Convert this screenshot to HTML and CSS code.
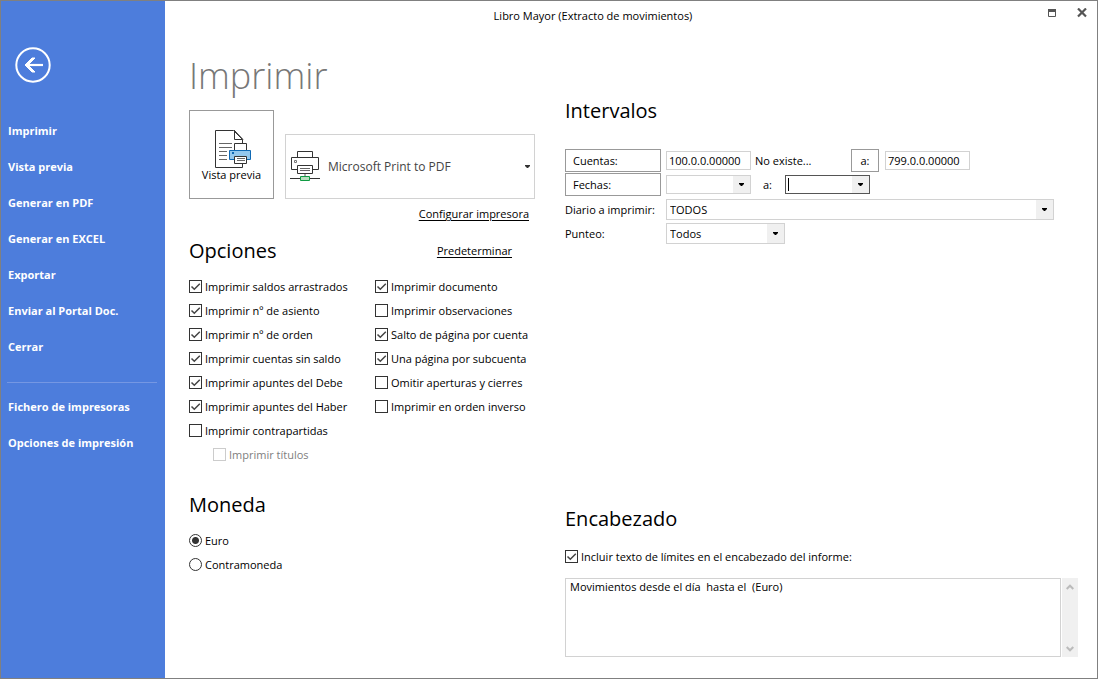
FILE: index.html
```html
<!DOCTYPE html>
<html lang="es">
<head>
<meta charset="utf-8">
<meta name="viewport" content="width=device-width, initial-scale=1">
<title>Libro Mayor (Extracto de movimientos)</title>
<link rel="stylesheet" href="styles.css">
</head>
<body>
<div class="window">
  <aside class="sidebar">
    <button class="back" type="button" aria-label="Volver">
      <svg width="36" height="36" viewBox="0 0 36 36" fill="none" stroke="#fff"><circle cx="18" cy="18" r="16.7" stroke-width="2"/><path d="M28 18H11.5" stroke-width="2.2"/><path d="M17 11h3L13 18l7 7H17l-7-7z" fill="#fff" stroke-width="1"/></svg>
    </button>
    <nav class="menu">
      <button type="button">Imprimir</button>
      <button type="button">Vista previa</button>
      <button type="button">Generar en PDF</button>
      <button type="button">Generar en EXCEL</button>
      <button type="button">Exportar</button>
      <button type="button">Enviar al Portal Doc.</button>
      <button type="button">Cerrar</button>
      <hr>
      <button type="button">Fichero de impresoras</button>
      <button type="button">Opciones de impresión</button>
    </nav>
  </aside>

  <div class="main">
    <header class="titlebar">
      <span class="title">Libro Mayor (Extracto de movimientos)</span>
      <div class="controls">
        <button type="button" aria-label="Maximizar"><svg width="10" height="10" viewBox="0 0 10 10"><path d="M1.500 1.500h7v7h-7z" fill="none" stroke="#555"/><path d="M1 1h8v3H1z" fill="#555"/></svg></button>
        <button type="button" aria-label="Cerrar"><svg width="10" height="10" viewBox="0 0 10 10"><path d="M1 .5l8 8M9 .5L1 8.500" fill="none" stroke="#555" stroke-width="2.2"/></svg></button>
      </div>
    </header>

    <main class="content">
      <div class="left">
        <h1>Imprimir</h1>
        <div class="cards">
          <button class="preview" type="button">
            <svg width="41" height="38" viewBox="-4 0 41 38" fill="none"><path d="M27.500 14V10.500L18.500 1.500H.5V38.500H27.500V34" stroke="#333" fill="#fff"/><path d="M19.500 1.500V10.500H27.500M19 1l9 9.500" stroke="#333"/><path d="M4 14.500H17M4 18.500H17M4 22.500H12M4 26.500H12M4 30.500H12" stroke="#666"/><path d="M19.500 21.500V14.500H31.500V21.500" fill="#fff" stroke="#333"/><path d="M14.500 21.500H35.500V30.500H14.500Z" fill="#93c8ee" stroke="#0f69b4"/><path d="M17 23h2v2h-2z" fill="#0f69b4"/><path d="M19.500 27.500H31.500V34.500H19.500Z" fill="#fff" stroke="#333"/><path d="M22 29.500H30M22 31.500H30" stroke="#666"/></svg>
            <span>Vista previa</span>
          </button>
          <button class="printer" type="button">
            <svg width="30" height="32" viewBox="0 0 30 32" fill="none"><path d="M7.500 7V.5H22.500V7" stroke="#333"/><path d="M1.500 6.500H28.500V18.500H1.500Z" fill="#fff" stroke="#333"/><path d="M4.500 9.500h2v2h-2z" stroke="#777"/><path d="M14 22h2v4h-2z" fill="#aaa"/><path d="M7.500 14.500H22.500V22.500H7.500Z" fill="#fff" stroke="#333"/><path d="M10 17.500H20M10 19.500H20" stroke="#666"/><path d="M0 27.500H30" stroke="#333"/><path d="M10.500 25.500H19.500V29.500H10.500Z" fill="#b7dfbe" stroke="#109b43"/></svg>
            <span>Microsoft Print to PDF</span>
            <svg width="5" height="3" viewBox="0 0 5 3"><path d="M0 0h5v1L3 3H2L0 1z" fill="#333"/></svg>
          </button>
        </div>
        <a class="configure" href="#">Configurar impresora</a>

        <div class="heading-row">
          <h2>Opciones</h2>
          <a href="#">Predeterminar</a>
        </div>
        <div class="options">
          <div>
            <label><input type="checkbox" checked>Imprimir saldos arrastrados</label>
            <label><input type="checkbox" checked>Imprimir nº de asiento</label>
            <label><input type="checkbox" checked>Imprimir nº de orden</label>
            <label><input type="checkbox" checked>Imprimir cuentas sin saldo</label>
            <label><input type="checkbox" checked>Imprimir apuntes del Debe</label>
            <label><input type="checkbox" checked>Imprimir apuntes del Haber</label>
            <label><input type="checkbox">Imprimir contrapartidas</label>
            <label class="nested"><input type="checkbox" disabled>Imprimir títulos</label>
          </div>
          <div>
            <label><input type="checkbox" checked>Imprimir documento</label>
            <label><input type="checkbox">Imprimir observaciones</label>
            <label><input type="checkbox" checked>Salto de página por cuenta</label>
            <label><input type="checkbox" checked>Una página por subcuenta</label>
            <label><input type="checkbox">Omitir aperturas y cierres</label>
            <label><input type="checkbox">Imprimir en orden inverso</label>
          </div>
        </div>

        <section class="currency">
          <h2>Moneda</h2>
          <label><input type="radio" name="moneda" checked>Euro</label>
          <label><input type="radio" name="moneda">Contramoneda</label>
        </section>
      </div>

      <div class="right">
        <section class="ranges">
          <h2>Intervalos</h2>
          <div class="row">
            <button class="field-button" type="button">Cuentas:</button>
            <input class="text" type="text" value="100.0.0.00000" aria-label="Cuenta inicial">
            <span class="status">No existe...</span>
            <button class="to-button" type="button">a:</button>
            <input class="text" type="text" value="799.0.0.00000" aria-label="Cuenta final">
          </div>
          <div class="row">
            <button class="field-button" type="button">Fechas:</button>
            <select class="date" aria-label="Fecha inicial"><option></option></select>
            <span class="to">a:</span>
            <select class="date active" aria-label="Fecha final"><option></option></select>
          </div>
          <div class="row lower">
            <label class="name" for="diario">Diario a imprimir:</label>
            <select class="wide" id="diario"><option>TODOS</option></select>
          </div>
          <div class="row lower">
            <label class="name" for="punteo">Punteo:</label>
            <select class="medium" id="punteo"><option>Todos</option></select>
          </div>
        </section>

        <section class="header-text">
          <h2>Encabezado</h2>
          <label><input type="checkbox" checked>Incluir texto de límites en el encabezado del informe:</label>
          <div class="memo">
            <textarea aria-label="Texto del encabezado">Movimientos desde el día  hasta el  (Euro)</textarea>
            <div class="scroll">
              <svg width="8" height="6" viewBox="0 0 8 6"><path d="M.7 5L4 1.700L7.300 5" fill="none" stroke="#bbb" stroke-width="2"/></svg>
              <svg width="8" height="6" viewBox="0 0 8 6"><path d="M.7 1L4 4.300L7.300 1" fill="none" stroke="#bbb" stroke-width="2"/></svg>
            </div>
          </div>
        </section>
      </div>
    </main>
  </div>
</div>
</body>
</html>
```

FILE: styles.css
```css
* { box-sizing: border-box; }

body {
  margin: 0;
  background: #fff;
  color: #000;
  font: 11px/16px "Segoe UI", "Open Sans", "Noto Sans", sans-serif;
}

button, input, select, textarea {
  margin: 0;
  font: inherit;
  color: inherit;
  border-radius: 0;
}

a { color: #000; text-underline-offset: 2px; }

h1, h2 { margin: 0; font-weight: 400; }
h1 { font-size: 36px; line-height: 40px; font-weight: 350; color: #777; margin-bottom: 14px; }
h2 { font-size: 20px; line-height: 24px; }

.window {
  display: flex;
  min-height: 100vh;
  border: 1px solid #808080;
}

/* Sidebar */
.sidebar {
  flex: 0 0 164px;
  background: #4d7ddc;
  padding-top: 46px;
}
.back {
  display: block;
  margin-left: 14px;
  padding: 0;
  border: 0;
  background: none;
  height: 36px;
}
.menu { display: flex; flex-direction: column; margin-top: 30px; }
.menu button {
  height: 36px;
  padding: 0 7px;
  border: 0;
  background: none;
  color: #fff;
  font-weight: 700;
  text-align: left;
}
.menu hr {
  width: 150px;
  margin: 17px 6px 6px;
  border: 0;
  border-top: 1px solid #7597e3;
}

/* Title bar */
.main { flex: 1; min-width: 0; display: flex; flex-direction: column; }
.titlebar { display: flex; gap: 16px; height: 30px; align-items: center; }
.title { flex: 1; text-align: center; }
.controls { display: flex; align-self: flex-start; }
.controls button {
  display: grid;
  place-items: center;
  width: 30px;
  height: 24px;
  padding: 0;
  border: 0;
  background: none;
}

.content {
  flex: 1;
  display: grid;
  grid-template-columns: 346px minmax(0, 1fr);
  column-gap: 30px;
  padding: 25px 19px 21px 24px;
}

/* Printer choice */
.cards { display: flex; gap: 11px; align-items: flex-end; }
.preview {
  display: flex;
  flex-direction: column;
  align-items: center;
  width: 85px;
  height: 89px;
  padding: 18px 0 0;
  border: 1px solid #999;
  background: #fff;
}
.preview svg { overflow: visible; }
.printer {
  display: flex;
  flex: 1;
  align-items: center;
  gap: 8px;
  height: 65px;
  padding: 0 4px;
  border: 1px solid #d2d2d2;
  background: #fff;
  color: #444;
  font-size: 12px;
}
.printer span { flex: 1; text-align: left; }
.configure { display: block; width: max-content; margin: 7px 6px 17px auto; }
.heading-row {
  display: flex;
  justify-content: space-between;
  align-items: center;
  padding-right: 23px;
  margin-bottom: 12px;
}

/* Check boxes and radios */
.options { display: grid; grid-template-columns: 186px 1fr; }
.options label, .currency label, .header-text label {
  display: flex;
  align-items: center;
  gap: 3px;
  height: 24px;
  white-space: nowrap;
}
.options .nested { margin-left: 24px; color: #808080; }

input[type="checkbox"], input[type="radio"] {
  appearance: none;
  flex: none;
  width: 13px;
  height: 13px;
  margin-bottom: 1px;
  border: 1px solid #333;
  background: #fff;
}
input[type="checkbox"]:checked {
  background: url("data:image/svg+xml,%3Csvg xmlns='http://www.w3.org/2000/svg' width='11' height='11'%3E%3Cpath d='M1.500 5.500L4.300 8.300L9.800 2.800' fill='none' stroke='%23444' stroke-width='1.500'/%3E%3C/svg%3E") center no-repeat;
}
input[type="checkbox"]:disabled { border-color: #ccc; }
input[type="radio"] { border-radius: 50%; }
input[type="radio"]:checked { background: radial-gradient(circle, #333 3px, #fff 4px); }

.currency { margin-top: 26px; }
.currency h2 { margin-bottom: 12px; }

/* Ranges */
.right {
  display: flex;
  flex-direction: column;
  justify-content: space-between;
  padding-top: 43px;
}
.ranges h2 { margin-bottom: 26px; }
.row { display: flex; align-items: center; height: 24px; padding-bottom: 1px; }
.row.lower { padding: 1px 0 0; }
.field-button, .to-button {
  height: 23px;
  border: 1px solid #999;
  background: #fff;
}
.field-button { width: 96px; margin-right: 5px; padding: 0 7px; text-align: left; }
.to-button { width: 28px; margin-right: 6px; padding: 0; }
.text { width: 85px; height: 19px; padding: 0 2px; border: 1px solid #d2d2d2; }
.status { width: 96px; margin-left: 4px; }
.name { width: 96px; margin-right: 5px; white-space: nowrap; }
.to { width: 34px; padding-left: 12px; }

select {
  --arrow: url("data:image/svg+xml,%3Csvg xmlns='http://www.w3.org/2000/svg' width='17' height='19'%3E%3Cpath d='M0 0h17v19H0z' fill='%23f0f0f0'/%3E%3Cpath d='M6 8h5v1L9 11H8L6 9z'/%3E%3C/svg%3E") right center no-repeat;
  appearance: none;
  height: 21px;
  padding: 0 20px 0 3px;
  border: 1px solid #d2d2d2;
  background: var(--arrow), #fff;
}
select.date { width: 85px; height: 19px; }
/* Focused date field with its text cursor */
select.active {
  border-color: #555;
  background: var(--arrow), linear-gradient(#000, #000) 2px center / 1px 13px no-repeat, #fff;
}
select.wide { flex: 1; margin-right: 24px; }
select.medium { width: 119px; }

/* Report heading */
.header-text h2 { margin-bottom: 14px; }
.memo { display: flex; gap: 1px; margin-top: 9px; }
.memo textarea {
  flex: 1;
  height: 79px;
  padding: 0 4px;
  border: 1px solid #d2d2d2;
  resize: none;
  overflow: hidden;
}
.scroll {
  display: flex;
  flex-direction: column;
  justify-content: space-between;
  align-items: center;
  width: 16px;
  padding: 6px 0 5px;
  background: #f0f0f0;
}
```
